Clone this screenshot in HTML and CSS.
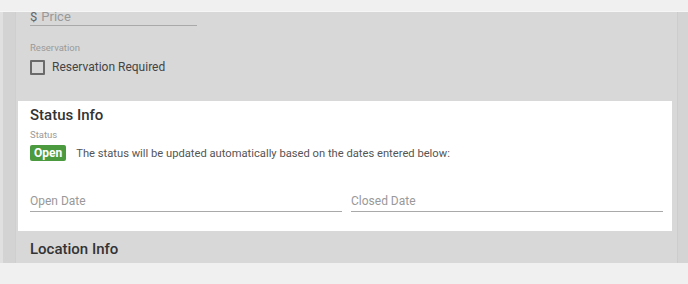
FILE: index.html
```html
<!DOCTYPE html>
<html>
<head>
<meta charset="utf-8">
<link rel="stylesheet" href="styles.css">
</head>
<body>
<div class="topbar"></div>
<div class="panel">
  <div class="gutter"></div>
  <div class="main">
    <div class="content">
      <div class="section plain">
        <div class="field price-field"><span class="prefix">$</span><span class="placeholder">Price</span></div>
        <div class="label res-label">Reservation</div>
        <label class="check-row"><span class="checkbox"></span><span class="check-text">Reservation Required</span></label>
      </div>
      <div class="card">
        <h2 class="title">Status Info</h2>
        <div class="label">Status</div>
        <div class="status-row"><span class="badge">Open</span><span class="note">The status will be updated automatically based on the dates entered below:</span></div>
        <div class="dates">
          <div class="field"><span class="placeholder">Open Date</span></div>
          <div class="field"><span class="placeholder">Closed Date</span></div>
        </div>
      </div>
      <div class="section plain">
        <h2 class="title">Location Info</h2>
      </div>
    </div>
  </div>
  <div class="scrollbar"></div>
</div>
</body>
</html>
```
FILE: styles.css
```css
html, body {
  margin: 0;
  padding: 0;
}
body {
  background: #f0f0f0;
  font-family: Roboto, "Liberation Sans", sans-serif;
  width: 688px;
  height: 284px;
  overflow: hidden;
}
.topbar {
  height: 11px;
  background: #f0f0f0;
  border-bottom: 1px solid #f6f6f6;
}
.panel {
  height: 251px;
  display: flex;
  background: #d8d8d8;
  overflow: hidden;
}
.gutter {
  width: 12px;
  flex: none;
  background: #d3d3d3;
  border-left: 3px solid #e0e0e0;
  border-right: 1px solid #cfcfcf;
}
.main {
  flex: 1;
  padding-left: 2px;
  padding-right: 5px;
  min-width: 0;
}
.scrollbar {
  width: 10px;
  flex: none;
  background: #d4d4d4;
  border-left: 1px solid #cdcdcd;
}
.content {
  margin-top: -5px;
}
.section {
  padding: 0 12px;
}
.field {
  display: flex;
  align-items: center;
  gap: 4px;
  height: 17px;
  border-bottom: 1px solid #a9a9a9;
  font-size: 13px;
}
.price-field {
  width: 167px;
  padding-top: 1px;
}
.prefix {
  color: #666;
}
.placeholder {
  color: #999;
}
.label {
  font-size: 9.5px;
  color: #9a9a9a;
  line-height: 12px;
}
.res-label {
  margin-top: 16px;
}
.check-row {
  display: flex;
  align-items: center;
  gap: 7px;
  margin-top: 5px;
  height: 16px;
}
.checkbox {
  width: 11px;
  height: 11px;
  border: 2px solid #6a6a6a;
  border-radius: 1px;
}
.check-text {
  font-size: 12px;
  color: #444;
}
.card {
  background: #fff;
  margin-top: 26px;
  padding: 5px 9px 19px 12px;
}
.title {
  margin: 0;
  font-size: 15px;
  font-weight: 500;
  color: #333;
  line-height: 19px;
}
.card .label {
  margin-top: 4px;
}
.status-row {
  display: flex;
  align-items: center;
  gap: 10px;
  margin-top: 4px;
}
.badge {
  background: #4b9a3f;
  color: #fff;
  font-weight: 700;
  font-size: 12px;
  line-height: 16px;
  padding: 0 4px;
  border-radius: 2px;
}
.note {
  font-size: 11.2px;
  color: #555;
}
.dates {
  display: grid;
  grid-template-columns: 1fr 1fr;
  gap: 9px;
  margin-top: 30px;
}
.dates .field {
  height: 20px;
  font-size: 12px;
}
.plain .title {
  margin-top: 9px;
}
```
